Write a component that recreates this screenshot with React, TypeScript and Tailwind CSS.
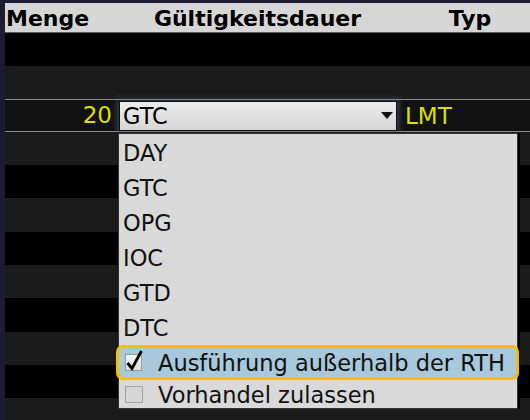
import React from "react"

const rowHeights = [33, 33, 33, 33, 33, 34, 33, 33, 34, 33, 33, 33]
const options = ["DAY", "GTC", "OPG", "IOC", "GTD", "DTC"]

function Arrow() {
  return (
    <svg width="12" height="7" viewBox="0 0 12 7">
      <path d="M0 0H12L6 7Z" fill="#111" />
    </svg>
  )
}

function SelectedRow() {
  return (
    <div className="flex h-[33px] items-center border-y border-[#8a8a8a] bg-[#121212] text-[22.5px] leading-none">
      <div className="w-[110px] pr-[3px] text-right text-[23px] text-[#dede00]">20</div>
      <div className="ml-[4px] flex h-[30px] w-[278px] items-center justify-between border border-[#111] bg-gradient-to-b from-[#ececec] to-[#d6d6d6] pl-[3px] pr-[3px] text-black shadow-[0_0_5px_3px_rgba(80,100,125,0.45)]">
        <span className="pt-[1px]">GTC</span>
        <Arrow />
      </div>
      <div className="ml-[8px] pt-[1px] text-[23px] text-[#dede00]">LMT</div>
    </div>
  )
}

export default function App() {
  return (
    <div className="relative h-[420px] w-[530px] overflow-hidden bg-[#1b1b31] pl-[5px] pt-[3px] font-['DejaVu_Sans',sans-serif]">
      <div className="flex h-[30px] items-center border-b border-[#5a5a5a] bg-[#d6d6d6] pt-[2px] text-[22px] font-bold leading-none text-black">
        <div className="w-[110px] pl-[1px]">Menge</div>
        <div className="w-[285px] text-center">Gültigkeitsdauer</div>
        <div className="flex-1 pl-[10px] text-center">Typ</div>
      </div>

      <div className="flex flex-col">
        {rowHeights.map((h, i) =>
          i === 2 ? (
            <SelectedRow key={i} />
          ) : (
            <div
              key={i}
              style={{ height: h }}
              className={i % 2 === 0 ? "bg-black" : "bg-[#1b1b1b]"}
            />
          )
        )}
      </div>

      {/* open dropdown */}
      <div className="absolute left-[118px] top-[133px] h-[276px] w-[400px] border border-[#333] bg-[#d9d9d9] pt-[1px] text-[22.5px] leading-none text-[#111] shadow-[2px_0_0_#000]">
        {options.map((o) => (
          <div key={o} className="flex h-[35px] items-center pl-[4px] pt-[2px]">
            {o}
          </div>
        ))}
        <div className="-ml-[3px] -mr-[2px] flex h-[35px] items-center rounded-[7px] border-[3px] border-[#f5c000] bg-[#a8c8dc] pl-[6px]">
          <div className="relative h-[17px] w-[17px] border border-[#9a9a9a] bg-gradient-to-b from-[#f4f4f4] to-[#dcdcdc]">
            <svg className="absolute -left-[1px] -top-[6px]" width="20" height="22" viewBox="0 0 20 22">
              <path d="M2.5 14L7 19.5L16.5 2" fill="none" stroke="#000" strokeWidth="2.8" strokeLinejoin="miter" />
            </svg>
          </div>
          <span className="ml-[16px] pt-[2px]">Ausführung außerhalb der RTH</span>
        </div>
        <div className="flex h-[28px] items-center pl-[6px]">
          <div className="h-[17px] w-[18px] border border-[#a4a4a4] bg-[#d6d6d6]" />
          <span className="ml-[15px] pt-[2px]">Vorhandel zulassen</span>
        </div>
      </div>
    </div>
  )
}
